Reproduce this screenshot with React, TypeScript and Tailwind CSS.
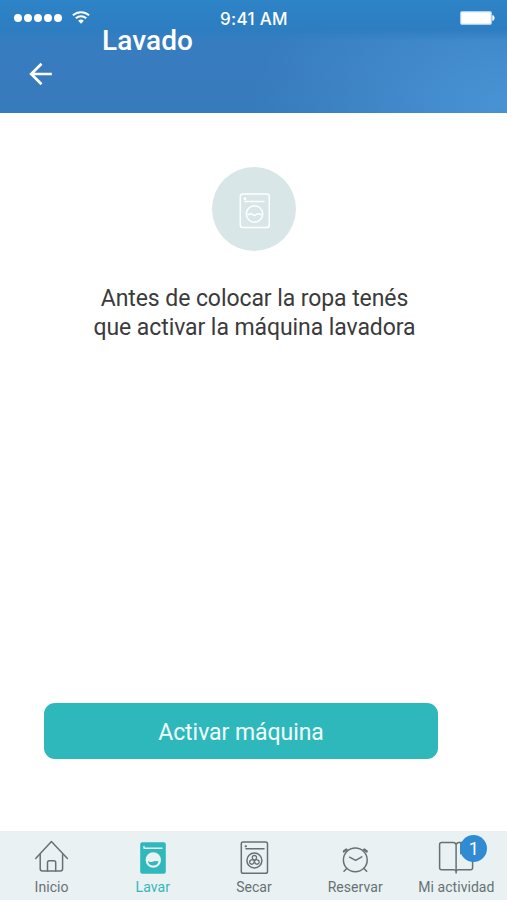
import type { ReactNode } from "react";

function WifiIcon() {
  return (
    <svg width="18" height="13" viewBox="0 0 18 13" fill="none" stroke="#fff" strokeWidth="2">
      <path d="M.9 4.3a12 12 0 0 1 16.2 0" />
      <path d="M3.8 7.3a7.6 7.6 0 0 1 10.4 0" />
      <path d="M9 12.7 6.2 9.8a4.2 4.2 0 0 1 5.6 0Z" fill="#fff" stroke="none" />
    </svg>
  );
}

function BatteryIcon() {
  return (
    <svg width="36" height="14" viewBox="0 0 36 14">
      <rect x=".5" y=".5" width="31" height="13" rx="1.5" fill="#fff" fillOpacity=".9" stroke="#a9d0ef" />
      <rect x="2" y="2" width="28" height="10" fill="#fff" />
      <path d="M32.8 4.5c1.7.4 1.7 4.6 0 5Z" fill="#fff" stroke="#fff" />
    </svg>
  );
}

function BackArrow() {
  return (
    <svg width="24" height="24" viewBox="0 0 24 24" fill="none" stroke="#fff" strokeWidth="2.7">
      <path d="M22.8 12H2.2M12.5 1.7 2.2 12l10.300 10.300" />
    </svg>
  );
}

function WasherOutline() {
  return (
    <svg width="32" height="36" viewBox="0 0 32 36" fill="none" stroke="#fff" strokeWidth="1.5" strokeLinecap="round">
      <rect x="1.3" y="1" width="29" height="33.5" rx="2.5" />
      <path d="M6 8.6h19" />
      <circle cx="6" cy="5.7" r=".8" fill="#fff" />
      <circle cx="15.5" cy="21" r="8.2" />
      <path d="M7.500 21.500h2.500c1.500-1 2.700-1 3.700 0s2.600 1 3.600 0 2.500-1 3.700 0h2.500" />
    </svg>
  );
}

function IconFrame({ children }: { children: ReactNode }) {
  return (
    <svg width="40" height="40" viewBox="0 0 40 40" fill="none" stroke="currentColor" strokeWidth="1.5" strokeLinecap="round" strokeLinejoin="round">
      {children}
    </svg>
  );
}

function HomeIcon() {
  return (
    <IconFrame>
      <path d="m3.700 21.500 15.700-17 16 17" />
      <path d="M8.200 17.500v14.300c0 1.500.8 2.200 2.200 2.200h18c1.400 0 2.200-.7 2.200-2.200V17.500" />
      <path d="M15.500 34v-8.500c0-1.200.6-1.800 1.800-1.800h4.600c1.200 0 1.800.6 1.800 1.800V34" />
    </IconFrame>
  );
}

function WashIcon() {
  return (
    <IconFrame>
      <rect x="7.200" y="5.200" width="25.600" height="31.500" rx="2" fill="currentColor" stroke="none" />
      <path d="M11 9.500v1.800h18" stroke="#eaf2f2" strokeWidth="1.400" />
      <circle cx="20.300" cy="23" r="7.700" fill="#eaf2f2" stroke="none" />
      <path d="M14.800 24.200c1.800.9 3.500 1.100 5.300.3 1.800-.8 3.700-.7 5.500.1-.7 2.500-2.700 3.900-5.300 3.900-2.700 0-4.900-1.600-5.500-4.300Z" fill="currentColor" stroke="none" />
    </IconFrame>
  );
}

function DryIcon() {
  return (
    <IconFrame>
      <rect x="7.300" y="5" width="26.200" height="31.300" rx="1.800" />
      <path d="M12 11.700h18" />
      <circle cx="11.800" cy="9.300" r=".7" fill="currentColor" strokeWidth="1" />
      <circle cx="20.400" cy="23.500" r="7.500" />
      <g strokeWidth="1.300">
        <path d="M20.400 23.500c-2.900-1.300-2.900-4.800 0-5.200 2.900.4 2.900 3.900 0 5.200Z" />
        <path d="M20.400 23.500c-2.900-1.300-2.900-4.800 0-5.200 2.900.4 2.900 3.900 0 5.200Z" transform="rotate(120 20.400 23.500)" />
        <path d="M20.400 23.500c-2.900-1.300-2.900-4.800 0-5.200 2.900.4 2.900 3.900 0 5.200Z" transform="rotate(240 20.400 23.500)" />
      </g>
    </IconFrame>
  );
}

function ClockIcon() {
  return (
    <IconFrame>
      <circle cx="20.300" cy="22.900" r="11.900" />
      <path d="m14.600 20.200 6 3.200 6.200-3.500" />
      <path d="m11.700 31.500-2.700 2.800m20-2.800 2.700 2.800" />
      <path d="m8.800 15 -.3-1 2.800-2 .7.700ZM31.800 15l.3-1-2.800-2-.7.700Z" strokeWidth="1.500" />
    </IconFrame>
  );
}

function BookIcon() {
  return (
    <IconFrame>
      <g transform="translate(.9 0)">
        <path d="M19.200 36V7.600c-.6-1.400-1.400-2-2.700-2H4.700c-1.200 0-2 .8-2 2v23.200c0 1.200.8 2 2 2h12.200c1.200 0 1.900.4 2.300 1.600.4-1.200 1.100-1.600 2.300-1.600h12.200c1.200 0 2-.8 2-2V7.600c0-1.200-.8-2-2-2H21.900c-1.300 0-2.100.6-2.700 2" />
        <path d="M23.800 5.600v11.200l3.200-2.700V5.600" strokeWidth="1.200" />
      </g>
    </IconFrame>
  );
}

const tabs = [
  { label: "Inicio", icon: <HomeIcon /> },
  { label: "Lavar", icon: <WashIcon />, active: true },
  { label: "Secar", icon: <DryIcon /> },
  { label: "Reservar", icon: <ClockIcon /> },
  { label: "Mi actividad", icon: <BookIcon />, badge: 1 },
];

export default function App() {
  return (
    <div className="flex h-[900px] w-[507px] flex-col overflow-hidden bg-white font-['Roboto',sans-serif]">
      <header className="h-[113px] shrink-0 bg-[linear-gradient(180deg,#2d84c7_0%,#2d7dc1_26%,transparent_36%),radial-gradient(ellipse_50%_130%_at_100%_90%,#4893d3_0%,#448dce_25%,transparent_100%),linear-gradient(180deg,#327fc2_0%,#357ec0_30%,#387bbe_65%,#367bbb_100%)] text-white">
        <div className="flex h-[28px] items-center pt-[8px]">
          <div className="ml-[14px] flex w-[206px] items-center">
            <div className="flex gap-[2px]">
              {[0, 1, 2, 3, 4].map((dot) => (
                <span key={dot} className="h-[8px] w-[8px] rounded-full bg-white" />
              ))}
            </div>
            <span className="-mt-[1px] ml-[10px]"><WifiIcon /></span>
          </div>
          <span className="mt-[1px] w-[240px] font-['Inter',sans-serif] text-[17px] leading-[20px] font-medium tracking-[0.3px]">9:41 AM</span>
          <BatteryIcon />
        </div>
        <h1 className="ml-[102px] text-[28px] leading-[25px] font-medium tracking-[0.1px]">Lavado</h1>
        <div className="mt-[9px] ml-[29px]"><BackArrow /></div>
      </header>

      <main className="flex grow flex-col items-center">
        <div className="mt-[54px] flex h-[84px] w-[84px] items-center justify-center rounded-full bg-[#d8e6e7] pt-[3px] pl-[2px]">
          <WasherOutline />
        </div>
        <p className="mt-[33px] pl-[2px] text-center text-[23px] leading-[29px] tracking-[-0.08px] text-[#3b3b3b]">
          Antes de colocar la ropa tenés
          <br />
          que activar la máquina lavadora
        </p>
        <button className="mt-auto mr-[25px] mb-[72px] h-[56px] w-[394px] rounded-[11px] bg-[#2fb8bc] pt-[4px] text-[23px] tracking-[-0.05px] text-[#f0ffff]">
          Activar máquina
        </button>
      </main>

      <nav className="grid h-[69px] shrink-0 grid-cols-5 bg-[#eaf1f2] pl-px">
        {tabs.map((tab) => (
          <div key={tab.label} className={`flex flex-col items-center pt-[6px] ${tab.active ? "text-[#30b8bc]" : "text-[#667174]"}`}>
            <div className="relative h-[40px] w-[40px]">
              {tab.icon}
              {tab.badge && (
                <span className="absolute -top-[2px] left-[24px] flex h-[27px] w-[27px] items-center justify-center rounded-full bg-[#318bd2] text-[18px] text-white">
                  {tab.badge}
                </span>
              )}
            </div>
            <span className="mt-[2px] text-[14px] leading-[16px] tracking-[0.05px] whitespace-nowrap">{tab.label}</span>
          </div>
        ))}
      </nav>
    </div>
  );
}
